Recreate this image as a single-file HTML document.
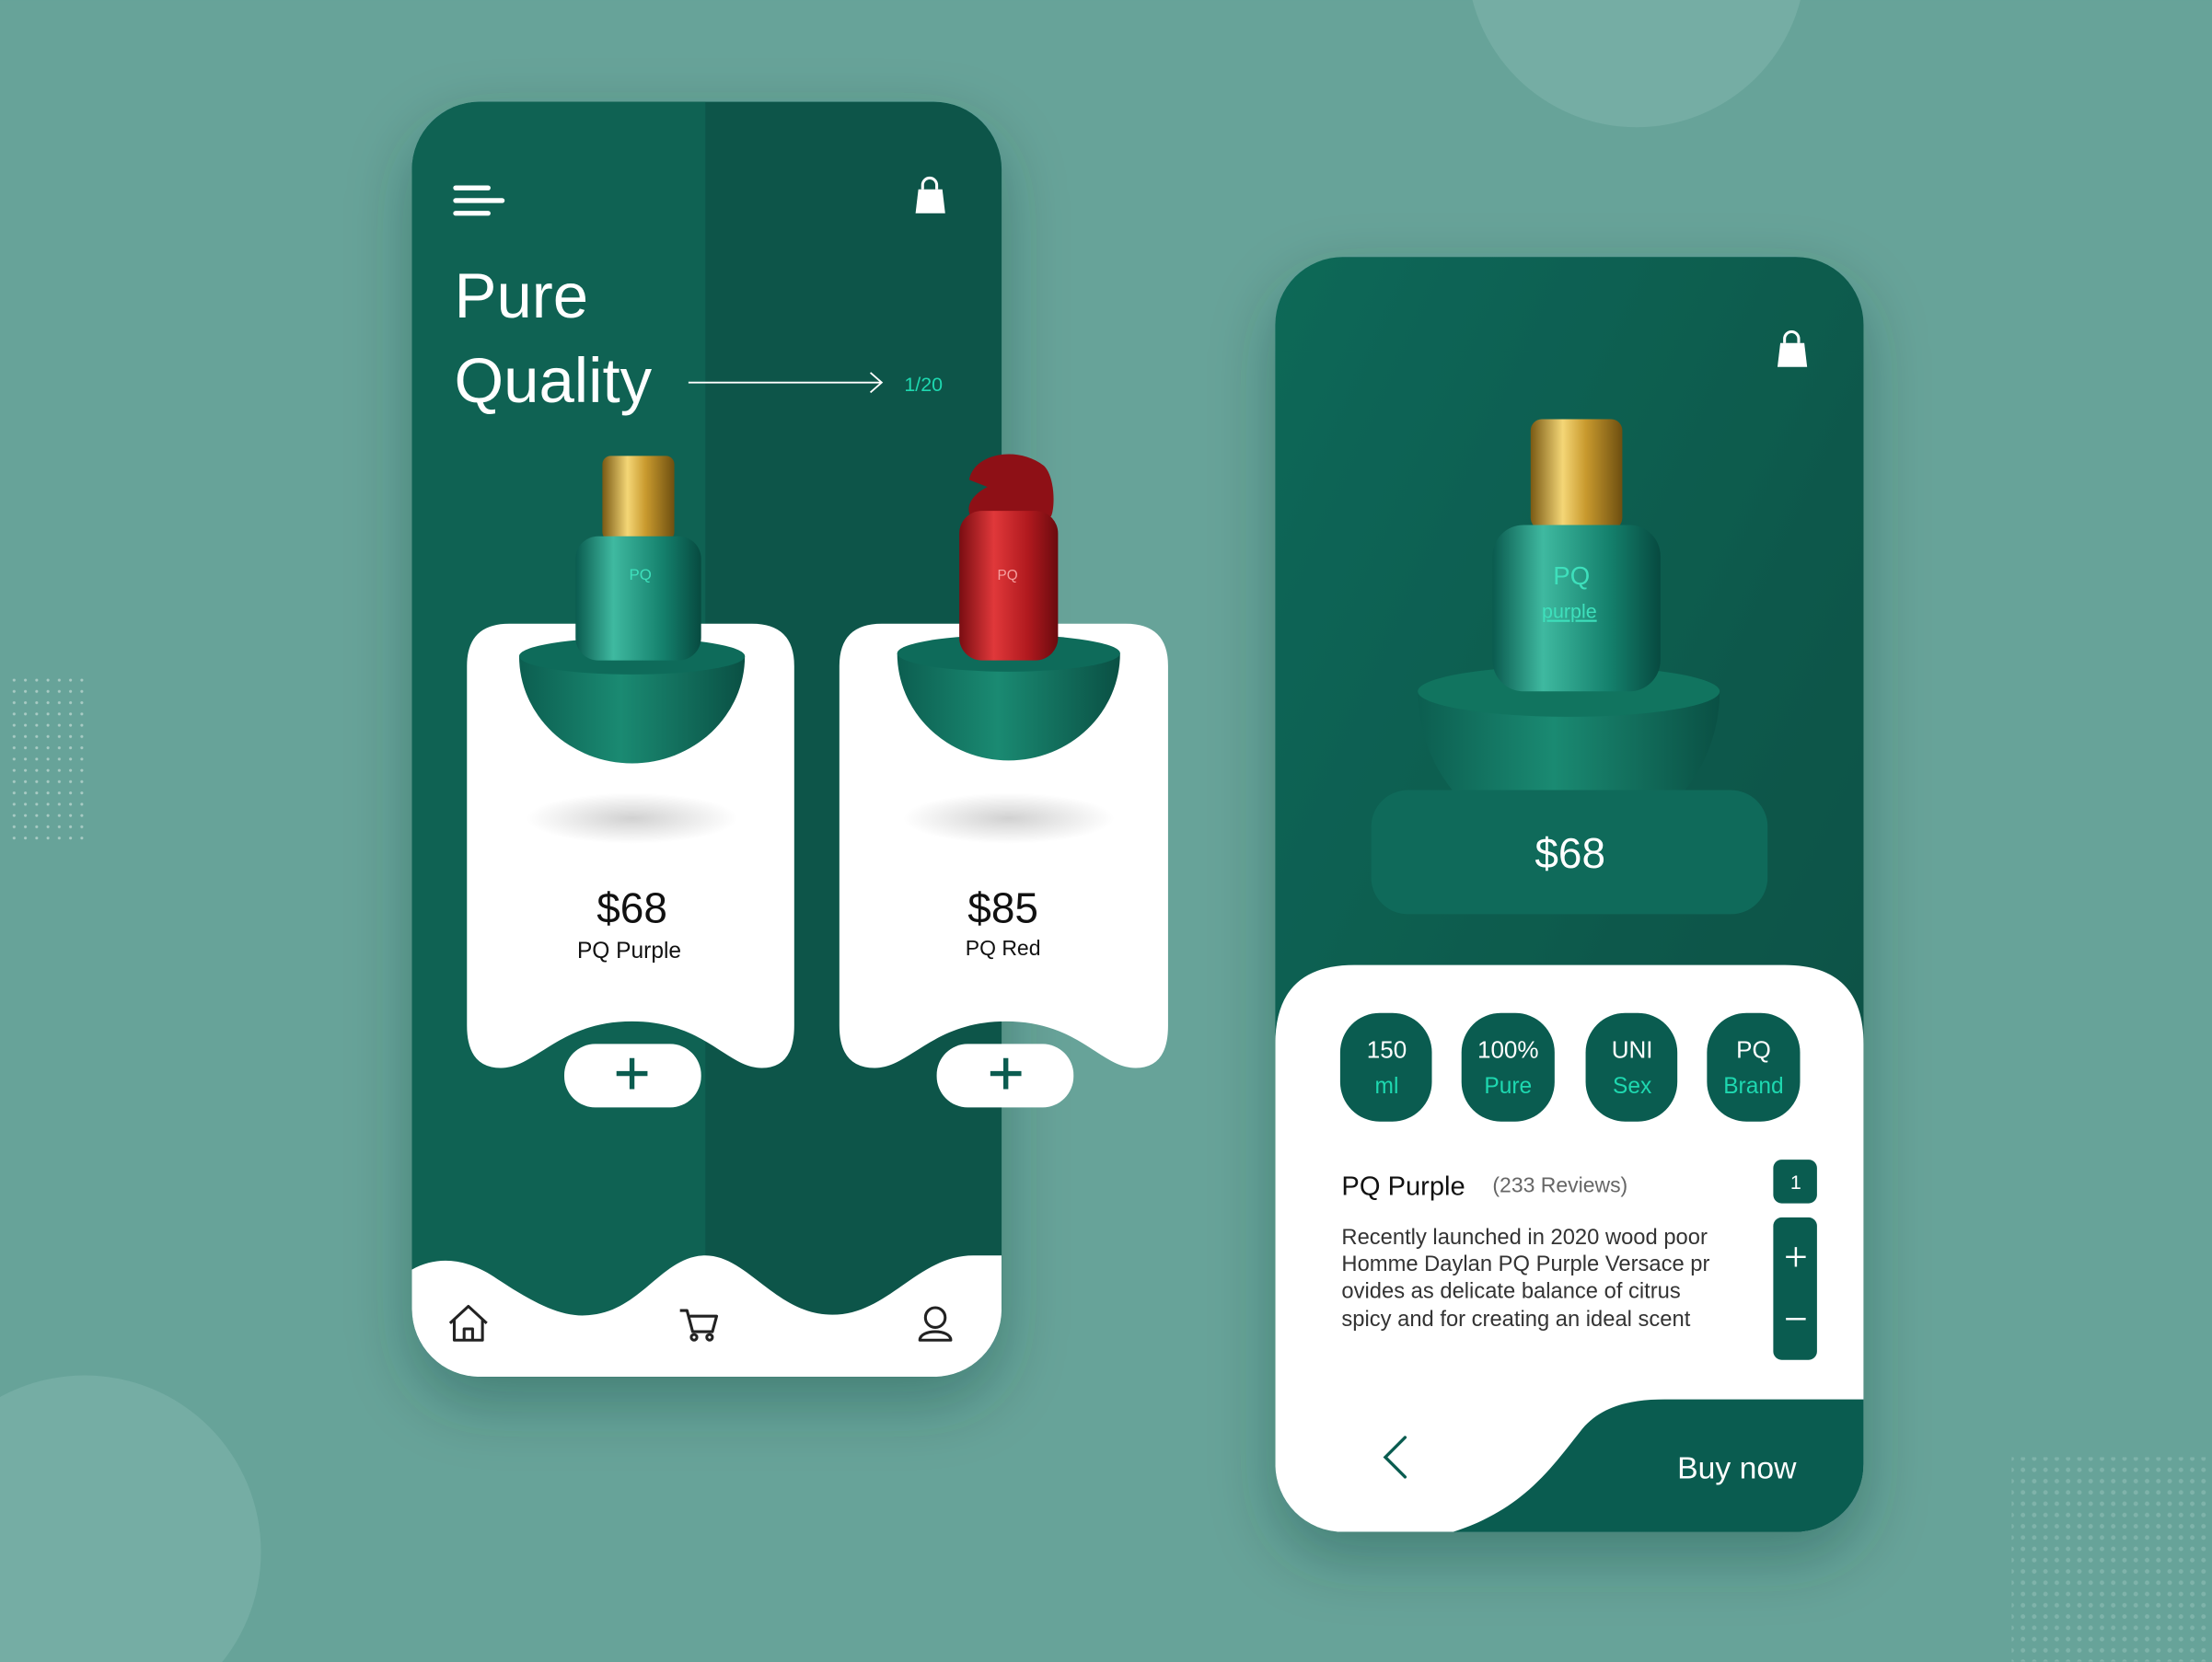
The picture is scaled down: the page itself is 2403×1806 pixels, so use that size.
<!DOCTYPE html>
<html><head><meta charset="utf-8"><style>html,body{margin:0;padding:0;background:#67a399;overflow:hidden}svg{display:block}text{font-family:"Liberation Sans",sans-serif}</style></head><body>
<svg width="2403" height="1806" viewBox="0 0 1568 1178" xmlns="http://www.w3.org/2000/svg">
<defs>
<pattern id="dots" width="8" height="8" patternUnits="userSpaceOnUse"><circle cx="2" cy="2" r="1" fill="#a9cbc4"/></pattern>
<pattern id="dots2" width="8" height="8" patternUnits="userSpaceOnUse"><circle cx="2" cy="2" r="1.6" fill="#7fb3aa"/></pattern>
<linearGradient id="gold" x1="0" x2="1"><stop offset="0" stop-color="#7a5a14"/><stop offset=".35" stop-color="#f4d676"/><stop offset=".6" stop-color="#c99a2e"/><stop offset="1" stop-color="#6e4f10"/></linearGradient>
<linearGradient id="glass" x1="0" x2="1"><stop offset="0" stop-color="#0a5b4f"/><stop offset=".3" stop-color="#3fb9a0"/><stop offset=".7" stop-color="#14806c"/><stop offset="1" stop-color="#074a40"/></linearGradient>
<linearGradient id="red" x1="0" x2="1"><stop offset="0" stop-color="#7a0d12"/><stop offset=".35" stop-color="#e0383a"/><stop offset=".7" stop-color="#b0191e"/><stop offset="1" stop-color="#6a0a0e"/></linearGradient>
<linearGradient id="bowl" x1="0" x2="1"><stop offset="0" stop-color="#0c5e50"/><stop offset=".45" stop-color="#1a8a72"/><stop offset="1" stop-color="#0a5044"/></linearGradient>
<linearGradient id="rbg" x1="0" y1="0" x2="1" y2="1"><stop offset="0" stop-color="#0f6858"/><stop offset="1" stop-color="#064d42"/></linearGradient>
<radialGradient id="sh"><stop offset="0" stop-color="#000" stop-opacity=".18"/><stop offset="1" stop-color="#000" stop-opacity="0"/></radialGradient>
<clipPath id="lc"><rect x="292" y="72" width="418" height="904" rx="48"/></clipPath>
<clipPath id="rc"><rect x="904" y="182" width="417" height="904" rx="48"/></clipPath>
<filter id="ds" x="-20%" y="-20%" width="140%" height="140%"><feDropShadow dx="0" dy="18" stdDeviation="22" flood-color="#0a3a33" flood-opacity=".35"/></filter>
</defs>
<rect width="1568" height="1178" fill="#67a399"/>
<circle cx="1160" cy="-30" r="120" fill="#75ada4"/>
<circle cx="60" cy="1100" r="125" fill="#75ada4"/>
<rect x="6" y="476" width="56" height="124" fill="url(#dots)"/>
<rect x="1426" y="1033" width="142" height="145" fill="url(#dots2)"/>

<g filter="url(#ds)"><rect x="292" y="72" width="418" height="904" rx="48" fill="#07554a"/></g>
<g clip-path="url(#lc)">
<rect x="292" y="72" width="208" height="904" fill="#0f6253"/>
<path d="M292,976 L292,900 C310,890 330,892 350,905 C380,925 400,935 420,932 C455,928 470,890 500,890 C530,890 550,932 590,932 C630,932 650,890 690,890 L710,890 L710,976 Z" fill="#fff"/>
</g>
<g stroke="#fff" stroke-width="3.5" stroke-linecap="round"><line x1="323" y1="133" x2="346" y2="133"/><line x1="323" y1="142" x2="356" y2="142"/><line x1="323" y1="151" x2="346" y2="151"/></g>
<path d="M649,151 L651,134 H668 L670,151 Z" fill="#fff"/><path d="M654,134 V131 a5,5 0 0 1 10,0 V134" stroke="#fff" stroke-width="2" fill="none"/>
<text x="322" y="225" font-size="45" fill="#fff" font-weight="300">Pure</text>
<text x="322" y="285" font-size="45" fill="#fff" font-weight="300">Quality</text>
<line x1="488" y1="271" x2="625" y2="271" stroke="#fff" stroke-width="1.2"/><path d="M617,264 L625,271 L617,278" stroke="#fff" stroke-width="1.2" fill="none"/>
<text x="641" y="277" font-size="14" fill="#1ed8b0">1/20</text>

<path d="M361,442 H533 Q563,442 563,472 V727 Q563,757 540,757 C515,757 500,724 448,724 C396,724 380,757 355,757 Q331,757 331,727 V472 Q331,442 361,442Z" fill="#fff"/>
<ellipse cx="448" cy="580" rx="75" ry="18" fill="url(#sh)"/>
<path d="M368,465 A80,76 0 0 0 528,465 Z" fill="url(#bowl)"/>
<ellipse cx="448" cy="465" rx="80" ry="13" fill="#0e6b5a"/>
<rect x="427" y="323" width="51" height="60" rx="6" fill="url(#gold)"/>
<rect x="408" y="380" width="89" height="88" rx="16" fill="url(#glass)"/>
<text x="446" y="411" font-size="11" fill="#3ee0bc">PQ</text>
<rect x="400" y="740" width="97" height="45" rx="22" fill="#fff"/>
<path d="M448,750 V772 M437,761 H459" stroke="#0b5c50" stroke-width="3.5"/>
<text x="448" y="654" font-size="30" fill="#111" text-anchor="middle">$68</text>
<text x="446" y="679" font-size="16" fill="#111" text-anchor="middle">PQ Purple</text>

<path d="M625,442 H798 Q828,442 828,472 V727 Q828,757 805,757 C780,757 765,724 713,724 C661,724 645,757 620,757 Q595,757 595,727 V472 Q595,442 625,442Z" fill="#fff"/>
<ellipse cx="715" cy="580" rx="75" ry="18" fill="url(#sh)"/>
<path d="M636,463 A79,76 0 0 0 794,463 Z" fill="url(#bowl)"/>
<ellipse cx="715" cy="463" rx="79" ry="13" fill="#0e6b5a"/>
<path d="M687,340 C690,322 720,315 740,330 C748,338 748,360 745,366 H688 C684,358 690,350 700,345 Z" fill="#8e1016"/>
<rect x="680" y="362" width="70" height="106" rx="16" fill="url(#red)"/>
<text x="707" y="411" font-size="10" fill="#f6a0a0">PQ</text>
<rect x="664" y="740" width="97" height="45" rx="22" fill="#fff"/>
<path d="M713,750 V772 M702,761 H724" stroke="#0b5c50" stroke-width="3.5"/>
<text x="711" y="654" font-size="30" fill="#111" text-anchor="middle">$85</text>
<text x="711" y="677" font-size="15" fill="#111" text-anchor="middle">PQ Red</text>

<g stroke="#222" stroke-width="2" fill="none" stroke-linejoin="round">
<path d="M319,938 L332,926 L345,938 M322,935 V950 H342 V935 M329,950 V942 H335 V950"/>
<path d="M482,929 H487 L491,944 H505 L508,933 H489"/><circle cx="492" cy="948" r="2"/><circle cx="503" cy="948" r="2"/>
<circle cx="663" cy="934" r="7"/><path d="M652,950 C652,942 674,942 674,950 Z"/>
</g>

<g filter="url(#ds)"><rect x="904" y="182" width="417" height="904" rx="48" fill="url(#rbg)"/></g>
<g clip-path="url(#rc)">
<path d="M1270,260 L1272,243 H1289 L1291,260 Z" transform="translate(-10,0)" fill="#fff"/>
<path d="M1265,243 V240 a5,5 0 0 1 10,0 V243" stroke="#fff" stroke-width="2" fill="none"/>
<path d="M1005,490 A107,110 0 0 0 1219,490 Z" fill="url(#bowl)"/>
<ellipse cx="1112" cy="490" rx="107" ry="18" fill="#11745f"/>
<rect x="1085" y="297" width="65" height="78" rx="8" fill="url(#gold)"/>
<rect x="1058" y="372" width="119" height="118" rx="22" fill="url(#glass)"/>
<text x="1101" y="414" font-size="18" fill="#3ee0bc">PQ</text>
<text x="1093" y="438" font-size="14" fill="#3ee0bc" text-decoration="underline">purple</text>
<rect x="972" y="560" width="281" height="88" rx="26" fill="#0f6a5a"/>
<text x="1113" y="615" font-size="30" fill="#fff" text-anchor="middle">$68</text>
<path d="M904,1086 V740 Q904,684 960,684 H1265 Q1321,684 1321,740 V1086 Z" fill="#fff"/>
<path d="M1030,1086 C1080,1070 1100,1040 1120,1015 C1135,995 1160,992 1180,992 H1321 V1086 Z" fill="#0a5c50"/>
</g>
<g font-size="17" text-anchor="middle">
<rect x="950" y="718" width="65" height="77" rx="28" fill="#0a5c50"/><text x="983" y="750" fill="#fff">150</text><text x="983" y="775" fill="#1ed8b0" font-size="16">ml</text>
<rect x="1036" y="718" width="66" height="77" rx="28" fill="#0a5c50"/><text x="1069" y="750" fill="#fff">100%</text><text x="1069" y="775" fill="#1ed8b0" font-size="16">Pure</text>
<rect x="1124" y="718" width="65" height="77" rx="28" fill="#0a5c50"/><text x="1157" y="750" fill="#fff">UNI</text><text x="1157" y="775" fill="#1ed8b0" font-size="16">Sex</text>
<rect x="1210" y="718" width="66" height="77" rx="28" fill="#0a5c50"/><text x="1243" y="750" fill="#fff">PQ</text><text x="1243" y="775" fill="#1ed8b0" font-size="16">Brand</text>
</g>
<text x="951" y="847" font-size="19" fill="#111">PQ Purple</text>
<text x="1058" y="845" font-size="15" fill="#666">(233 Reviews)</text>
<g font-size="15.5" fill="#333">
<text x="951" y="882">Recently launched in 2020 wood poor</text>
<text x="951" y="901">Homme Daylan PQ Purple Versace pr</text>
<text x="951" y="920">ovides as delicate balance of citrus</text>
<text x="951" y="940">spicy and for creating an ideal scent</text>
</g>
<rect x="1257" y="822" width="31" height="31" rx="6" fill="#0a5c50"/><text x="1273" y="843" font-size="14" fill="#fff" text-anchor="middle">1</text>
<rect x="1257" y="863" width="31" height="101" rx="6" fill="#0a5c50"/>
<path d="M1266,891 H1280 M1273,884 V898 M1266,935 H1280" stroke="#fff" stroke-width="1.6"/>
<path d="M996,1019 L982,1033 L996,1047" stroke="#0a5c50" stroke-width="2.2" fill="none" stroke-linecap="round"/>
<text x="1189" y="1048" font-size="22" fill="#fff">Buy now</text>
</svg>
</body></html>
